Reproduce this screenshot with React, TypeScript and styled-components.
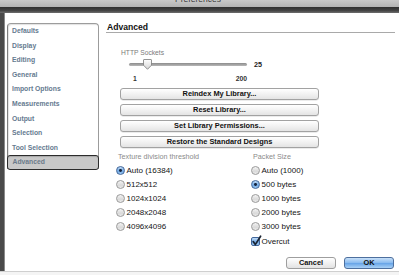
import React from 'react';
import styled, { createGlobalStyle } from 'styled-components';

const GlobalStyle = createGlobalStyle`
  html, body {
    margin: 0;
    padding: 0;
    background: #fff;
  }
  body {
    width: 399px;
    height: 275px;
    overflow: hidden;
    font-family: "Liberation Sans", Arial, sans-serif;
  }
`;

const sections = [
  'Defaults',
  'Display',
  'Editing',
  'General',
  'Import Options',
  'Measurements',
  'Output',
  'Selection',
  'Tool Selection',
  'Advanced',
];

const actions = [
  'Reindex My Library...',
  'Reset Library...',
  'Set Library Permissions...',
  'Restore the Standard Designs',
];

const textures = ['Auto (16384)', '512x512', '1024x1024', '2048x2048', '4096x4096'];
const packets = ['Auto (1000)', '500 bytes', '1000 bytes', '2000 bytes', '3000 bytes'];

function App() {
  return (
    <>
      <GlobalStyle />
      <Window>
        <TitleBar>
          <TitleText>Preferences</TitleText>
        </TitleBar>
        <ToolbarEdge />
        <Body>
          <Sidebar>
            {sections.map((s) => (
              <SideItem key={s} $selected={s === 'Advanced'}>
                {s}
              </SideItem>
            ))}
          </Sidebar>
          <Content>
            <Heading>Advanced</Heading>
            <Sockets>
              <SmallLabel>HTTP Sockets</SmallLabel>
              <SliderRow>
                <Track>
                  <Thumb width="9" height="11" viewBox="0 0 9 11">
                    <defs>
                      <linearGradient id="tg" x1="0" y1="0" x2="0" y2="1">
                        <stop offset="0" stopColor="#ffffff" />
                        <stop offset="1" stopColor="#d4d4d4" />
                      </linearGradient>
                    </defs>
                    <path
                      d="M1 0.5 H8 Q8.5 0.5 8.5 1 V6.2 L4.5 10.3 L0.5 6.2 V1 Q0.5 0.5 1 0.5 Z"
                      fill="url(#tg)"
                      stroke="#7a7a7a"
                      strokeWidth="0.8"
                    />
                  </Thumb>
                </Track>
                <Value>25</Value>
              </SliderRow>
              <Range>
                <span>1</span>
                <span>200</span>
              </Range>
            </Sockets>
            <Actions>
              {actions.map((a) => (
                <PushButton key={a}>{a}</PushButton>
              ))}
            </Actions>
            <Options>
              <Column>
                <GroupLabel>Texture division threshold</GroupLabel>
                {textures.map((t, i) => (
                  <OptionRow key={t}>
                    <Radio $on={i === 0} />
                    {t}
                  </OptionRow>
                ))}
              </Column>
              <Column>
                <GroupLabel>Packet Size</GroupLabel>
                {packets.map((p, i) => (
                  <OptionRow key={p}>
                    <Radio $on={i === 1} />
                    {p}
                  </OptionRow>
                ))}
                <OptionRow>
                  <Check>
                    <svg width="11" height="12" viewBox="0 0 11 12">
                      <path
                        d="M2.2 6.6 L4.3 9.6 L9.6 1.2"
                        fill="none"
                        stroke="#1b2533"
                        strokeWidth="1.7"
                        strokeLinecap="round"
                        strokeLinejoin="round"
                      />
                    </svg>
                  </Check>
                  Overcut
                </OptionRow>
              </Column>
            </Options>
            <Footer>
              <DialogButton>Cancel</DialogButton>
              <DialogButton $primary>OK</DialogButton>
            </Footer>
          </Content>
        </Body>
        <BottomEdge />
      </Window>
    </>
  );
}

export default App;

const Window = styled.div`
  width: 399px;
  height: 275px;
  display: flex;
  flex-direction: column;
  background: #fff;
`;

const TitleBar = styled.div`
  height: 7px;
  overflow: hidden;
  background: linear-gradient(#c9c9c9, #b3b3b3);
  text-align: center;
`;

const TitleText = styled.div`
  margin-top: -6px;
  margin-left: -3px;
  font-size: 8.5px;
  line-height: 10px;
  color: #3a3a3a;
`;

const ToolbarEdge = styled.div`
  height: 6px;
  background: linear-gradient(#2f2f2f, #444 60%, #6e6e6e);
`;

const Body = styled.div`
  flex: 1;
  display: flex;
  border-left: 4px solid #4a4a4a;
  box-shadow: inset 1px 0 0 #8a8a8a;
  min-height: 0;
`;

const Sidebar = styled.div`
  width: 90px;
  margin: 10px 0 0 3px;
  align-self: flex-start;
  display: flex;
  flex-direction: column;
  border: 1px solid #9c9c9c;
  border-left: 1.5px solid #7e7e7e;
  border-bottom: none;
  border-radius: 4px 4px 0 0;
  box-shadow: inset 1px 1px 1px #e2e2e2;
`;

const SideItem = styled.div<{ $selected?: boolean }>`
  height: 14.6px;
  line-height: 14.6px;
  padding-left: 4px;
  font-size: 6.8px;
  font-weight: bold;
  color: ${(p) => (p.$selected ? '#6b7a8a' : '#657a90')};
  white-space: nowrap;
  box-sizing: border-box;
  ${(p) =>
    p.$selected &&
    `
    margin: 0 -1px -1px -1.5px;
    padding-left: 5px;
    line-height: 12.6px;
    background: #c9c9c9;
    border: 1px solid #2c2c2c;
    border-radius: 3px;
    box-shadow: inset 0 1px 1px #a8a8a8;
  `}
`;

const Content = styled.div`
  flex: 1;
  margin: 0 4px 0 7px;
  padding-top: 9px;
  display: flex;
  flex-direction: column;
`;

const Heading = styled.div`
  font-size: 8.6px;
  font-weight: bold;
  line-height: 10px;
  color: #111;
  border-bottom: 1px solid #a9a9a9;
  padding-left: 1px;
`;

const Sockets = styled.div`
  margin-top: 16px;
  display: flex;
  flex-direction: column;
`;

const SmallLabel = styled.div`
  padding-left: 15px;
  font-size: 6.7px;
  line-height: 8px;
  color: #7a7a7a;
`;

const SliderRow = styled.div`
  margin: 2px 0 0 23px;
  height: 11px;
  display: flex;
  align-items: center;
`;

const Track = styled.div`
  position: relative;
  width: 118px;
  height: 2.5px;
  border-radius: 2px;
  background: linear-gradient(#8c8c8c, #b8b8b8);
`;

const Thumb = styled.svg`
  position: absolute;
  left: 13.5px;
  top: -4.5px;
  display: block;
`;

const Value = styled.span`
  margin-left: 7px;
  font-size: 7.2px;
  font-weight: bold;
  color: #222;
`;

const Range = styled.div`
  width: 114px;
  margin: 5px 0 0 27px;
  display: flex;
  justify-content: space-between;
  font-size: 6.8px;
  font-weight: bold;
  line-height: 8px;
  color: #333;
`;

const Actions = styled.div`
  margin: 5px 0 0 14px;
  width: 199px;
  display: flex;
  flex-direction: column;
  gap: 4px;
`;

const PushButton = styled.div`
  height: 12px;
  box-sizing: border-box;
  border: 1px solid #a2a2a2;
  border-radius: 3px;
  background: linear-gradient(#ffffff, #f2f2f2 50%, #e4e4e4);
  box-shadow: 0 0.5px 0 #d8d8d8;
  font-size: 7.4px;
  font-weight: bold;
  line-height: 10px;
  text-align: center;
  color: #111;
`;

const Options = styled.div`
  margin: 5px 0 0 10px;
  display: grid;
  grid-template-columns: 135px 1fr;
`;

const Column = styled.div`
  display: flex;
  flex-direction: column;
`;

const GroupLabel = styled.div`
  padding-left: 2px;
  height: 8px;
  font-size: 7.2px;
  line-height: 8px;
  color: #8a8a8a;
  white-space: nowrap;
  margin-bottom: 2px;
`;

const OptionRow = styled.div`
  height: 14.2px;
  display: flex;
  align-items: center;
  gap: 1.5px;
  font-size: 8px;
  color: #141414;
  white-space: nowrap;
`;

const Radio = styled.span<{ $on?: boolean }>`
  position: relative;
  width: 9px;
  height: 9px;
  box-sizing: border-box;
  border-radius: 50%;
  border: 0.8px solid ${(p) => (p.$on ? '#41669a' : '#9a9a9a')};
  background: ${(p) =>
    p.$on
      ? 'linear-gradient(#c4def7, #6ea6e3 55%, #9bc7f1)'
      : 'linear-gradient(#f4f4f4, #d9d9d9 60%, #ececec)'};
  &::after {
    content: '';
    display: ${(p) => (p.$on ? 'block' : 'none')};
    position: absolute;
    left: 2.3px;
    top: 2.3px;
    width: 2.8px;
    height: 2.8px;
    border-radius: 50%;
    background: #15223a;
  }
`;

const Check = styled.span`
  position: relative;
  width: 9px;
  height: 9px;
  box-sizing: border-box;
  border-radius: 2px;
  border: 0.8px solid #41669a;
  background: linear-gradient(#c4def7, #6ea6e3 55%, #9bc7f1);
  svg {
    position: absolute;
    left: -1px;
    top: -3px;
  }
`;

const Footer = styled.div`
  margin-top: 9px;
  display: flex;
  justify-content: flex-end;
  gap: 8px;
  padding-right: 1px;
`;

const DialogButton = styled.div<{ $primary?: boolean }>`
  width: 50px;
  height: 12px;
  box-sizing: border-box;
  border-radius: 3px;
  border: 1px solid ${(p) => (p.$primary ? '#4d6f9e' : '#9e9e9e')};
  background: ${(p) =>
    p.$primary
      ? 'linear-gradient(#c8e0f8, #8dbdf0 45%, #6aa6e8 55%, #a9d1f6)'
      : 'linear-gradient(#ffffff, #f1f1f1 50%, #e2e2e2)'};
  font-size: 7.4px;
  font-weight: bold;
  line-height: 10px;
  text-align: center;
  color: #111;
`;

const BottomEdge = styled.div`
  height: 3px;
  border-top: 1px solid #cfcfcf;
  background: #f4f4f4;
`;
